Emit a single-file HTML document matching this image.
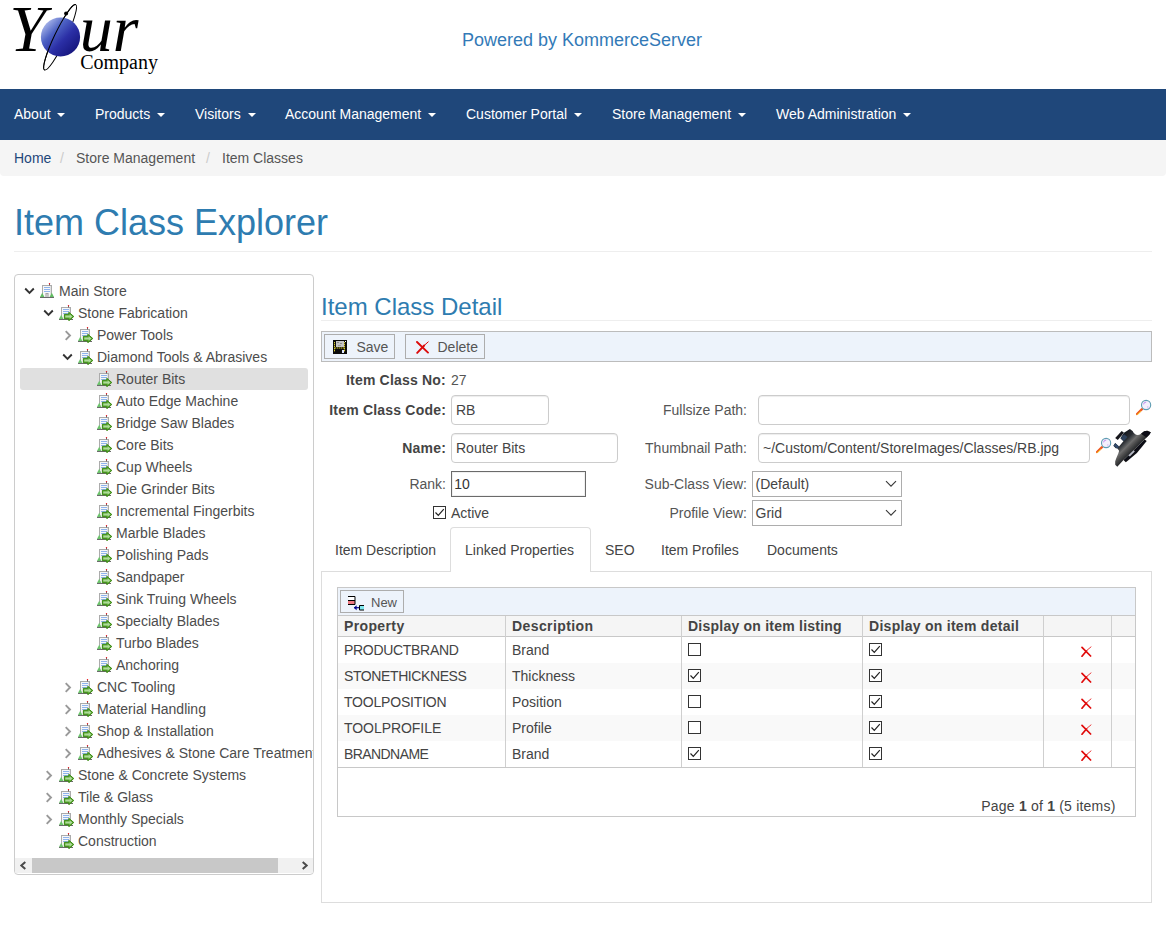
<!DOCTYPE html>
<html lang="en">
<head>
<meta charset="utf-8">
<title>Item Class Explorer</title>
<style>
*{box-sizing:border-box}
html,body{margin:0;padding:0}
body{width:1166px;height:930px;overflow:hidden;background:#fff;color:#333;font-family:"Liberation Sans",sans-serif;font-size:14px;line-height:20px;position:relative}
a{text-decoration:none;color:inherit}
.abs{position:absolute}
#logo{left:8px;top:0;width:170px;height:85px}
#powered{left:-1px;top:29px;width:1166px;text-align:center;font-size:18px;line-height:22px;color:#337ab7}
#nav{left:0;top:89px;width:1166px;height:51px;background:#1f477a}
#nav a{position:absolute;top:15px;color:#fff;font-size:14px;line-height:20px;white-space:nowrap}
#nav a i{display:inline-block;width:0;height:0;margin-left:3px;vertical-align:middle;border-top:4px solid #fff;border-left:4px solid transparent;border-right:4px solid transparent}
#crumb{left:0;top:140px;width:1166px;height:36px;background:#f5f5f5;border-radius:0 0 4px 4px}
#crumb span{position:absolute;top:8px;line-height:20px;white-space:nowrap;color:#555}
#crumb .sep{color:#ccc}
#h1{left:14px;top:203px;font-size:36px;line-height:40px;color:#2e7cb0;white-space:nowrap}
#h1line{left:14px;top:251px;width:1138px;height:1px;background:#eee}
#tree{left:14px;top:274px;width:300px;height:601px;border:1px solid #ccc;border-radius:4px;overflow:hidden;background:#fff}
.tr{position:absolute;height:22px;line-height:22px;white-space:nowrap;color:#4c4c4c}
.tr svg.ic{position:absolute;left:0;top:2px}
.tr span{position:absolute;left:19px;top:0}
.chev{position:absolute}
#sel{left:5px;top:93px;width:288px;height:22px;background:#e0e0e0;border-radius:3px}
#panel{left:321px;top:274px;width:831px;height:630px}
#h2{left:321px;top:292px;font-size:24px;line-height:30px;color:#2e7cb0;white-space:nowrap}
#h2line{left:321px;top:320px;width:831px;height:1px;background:#eee}
.tb{background:#edf3fb;border:1px solid #bcbcbc}
.btn{position:absolute;border:1px solid #adadad;background:#edf3fb;color:#555;white-space:nowrap}
.lbl{position:absolute;white-space:nowrap;text-align:right;line-height:20px;color:#555}
.lbl b{color:#444;letter-spacing:.2px}
.inp{position:absolute;border:1px solid #ccc;border-radius:4px;background:#fff;color:#444;padding:0 4px;white-space:nowrap;overflow:hidden;box-shadow:inset 0 1px 1px rgba(0,0,0,.075)}
.sel{position:absolute;border:1px solid #adadad;background:#fff;color:#444;padding:0 2.5px;white-space:nowrap}
.tabs a{position:absolute;top:540px;line-height:20px;color:#444;white-space:nowrap}
.cb{position:absolute;width:13px;height:13px;border:1px solid #333;background:#fff}
table{border-collapse:collapse}
</style>
</head>
<body>
<!-- header -->
<div class="abs" id="logo"><svg width="180" height="88" viewBox="0 0 180 88" style="position:absolute;left:-8px;top:0">
<defs><linearGradient id="sph" x1="0.1" y1="0.15" x2="0.85" y2="0.9"><stop offset="0" stop-color="#a9b6ea"/><stop offset=".3" stop-color="#4d62c4"/><stop offset=".6" stop-color="#2b2fa6"/><stop offset="1" stop-color="#15157c"/></linearGradient></defs>
<text x="9.6" y="51.4" font-family="Liberation Serif, serif" font-style="italic" font-size="66" fill="#000">Y</text>
<g transform="translate(60.1,37.3) rotate(-64.5)"><ellipse cx="0" cy="0" rx="36.2" ry="5.8" fill="none" stroke="#000" stroke-width="1"/></g>
<circle cx="60.5" cy="37" r="19.6" fill="url(#sph)"/>
<g transform="translate(60.1,37.3) rotate(-64.5)"><path d="M-36.2 0 A36.2 5.8 0 0 1 36.2 0" fill="none" stroke="#000" stroke-width="1"/></g>
<circle cx="66.1" cy="13.4" r="2" fill="#000"/>
<text x="79.7" y="51.4" font-family="Liberation Serif, serif" font-style="italic" font-size="66" fill="#000">ur</text>
<text x="80.2" y="69.1" font-family="Liberation Serif, serif" font-size="20" fill="#000">Company</text>
</svg></div>
<div class="abs" id="powered">Powered by KommerceServer</div>
<!-- navbar -->
<div class="abs" id="nav">
<a style="left:14px">About <i></i></a>
<a style="left:95px">Products <i></i></a>
<a style="left:195px">Visitors <i></i></a>
<a style="left:285px">Account Management <i></i></a>
<a style="left:466px">Customer Portal <i></i></a>
<a style="left:612px">Store Management <i></i></a>
<a style="left:776px">Web Administration <i></i></a>
</div>
<!-- breadcrumb -->
<div class="abs" id="crumb">
<span style="left:14px;color:#1f477a">Home</span>
<span class="sep" style="left:60px">/</span>
<span style="left:76px">Store Management</span>
<span class="sep" style="left:206px">/</span>
<span style="left:222px">Item Classes</span>
</div>
<div class="abs" id="h1">Item Class Explorer</div>
<div class="abs" id="h1line"></div>
<!-- tree -->
<div class="abs" id="tree">
<div class="abs" id="sel"></div>
<div class="tr" style="left:25px;top:5px"><svg class="chev" style="left:-16px;top:7px" width="11" height="8" viewBox="0 0 11 8"><path d="M1.2 1.5 L5.5 5.8 L9.8 1.5" fill="none" stroke="#333" stroke-width="1.9"/></svg><svg class="ic" width="16" height="17" viewBox="0 0 16 17"><rect x="2.5" y="3.5" width="9" height="12" fill="#f7f7f7" stroke="#ababab"/><rect x="10" y="4" width="1" height="11" fill="#e2e2e2"/><rect x="9" y="2" width="1" height="1.5" fill="#666"/><rect x="8.8" y="0.9" width="1.4" height="1.3" rx=".6" fill="#e8141c"/><rect x="4" y="5" width="6" height="1" fill="#8fb4ee"/><rect x="4" y="7" width="6" height="1" fill="#8fb4ee"/><rect x="4" y="9" width="6" height="1" fill="#8fb4ee"/><rect x="5.5" y="11" width="3" height="4" fill="#9c9c9c"/><rect x="6.3" y="11.8" width="1.4" height="3.2" fill="#d6d6d6"/><path d="M0 15 L2.2 10.8 L4.4 15Z M9.6 15 L11.8 10.8 L14 15Z" fill="#62bd62"/><rect x="0" y="15" width="14" height="1" fill="#6a6a6a"/></svg><span>Main Store</span></div>
<div class="tr" style="left:44px;top:27px"><svg class="chev" style="left:-16px;top:7px" width="11" height="8" viewBox="0 0 11 8"><path d="M1.2 1.5 L5.5 5.8 L9.8 1.5" fill="none" stroke="#333" stroke-width="1.9"/></svg><svg class="ic" width="16" height="17" viewBox="0 0 16 17"><rect x="2.5" y="3.5" width="9" height="12" fill="#f7f7f7" stroke="#ababab"/><rect x="10" y="4" width="1" height="11" fill="#e2e2e2"/><rect x="9" y="2" width="1" height="1.5" fill="#666"/><rect x="8.8" y="0.9" width="1.4" height="1.3" rx=".6" fill="#e8141c"/><rect x="4" y="5" width="6" height="1" fill="#8fb4ee"/><rect x="4" y="7" width="6" height="1" fill="#8fb4ee"/><rect x="4" y="9" width="6" height="1" fill="#8fb4ee"/><path d="M0 15 L2.2 10.8 L4.4 15Z" fill="#6cc46c"/><rect x="0" y="15" width="14" height="1" fill="#6a6a6a"/><path d="M5.4 10.3 H9.8 V8.3 L14.8 12.5 L9.8 16.7 V14.7 H5.4Z" fill="#5aa632" stroke="#39890f" stroke-width="1" stroke-linejoin="round"/><path d="M6.3 11.4 H10.7 V10.2 L13.4 12.5 L10.7 14.8 V13.6 H6.3Z" fill="#aedb9a"/></svg><span>Stone Fabrication</span></div>
<div class="tr" style="left:63px;top:49px"><svg class="chev" style="left:-14px;top:5px" width="8" height="13" viewBox="0 0 8 13"><path d="M1.7 2.1 L6 6.5 L1.7 10.9" fill="none" stroke="#9a9a9a" stroke-width="1.9"/></svg><svg class="ic" width="16" height="17" viewBox="0 0 16 17"><rect x="2.5" y="3.5" width="9" height="12" fill="#f7f7f7" stroke="#ababab"/><rect x="10" y="4" width="1" height="11" fill="#e2e2e2"/><rect x="9" y="2" width="1" height="1.5" fill="#666"/><rect x="8.8" y="0.9" width="1.4" height="1.3" rx=".6" fill="#e8141c"/><rect x="4" y="5" width="6" height="1" fill="#8fb4ee"/><rect x="4" y="7" width="6" height="1" fill="#8fb4ee"/><rect x="4" y="9" width="6" height="1" fill="#8fb4ee"/><path d="M0 15 L2.2 10.8 L4.4 15Z" fill="#6cc46c"/><rect x="0" y="15" width="14" height="1" fill="#6a6a6a"/><path d="M5.4 10.3 H9.8 V8.3 L14.8 12.5 L9.8 16.7 V14.7 H5.4Z" fill="#5aa632" stroke="#39890f" stroke-width="1" stroke-linejoin="round"/><path d="M6.3 11.4 H10.7 V10.2 L13.4 12.5 L10.7 14.8 V13.6 H6.3Z" fill="#aedb9a"/></svg><span>Power Tools</span></div>
<div class="tr" style="left:63px;top:71px"><svg class="chev" style="left:-16px;top:7px" width="11" height="8" viewBox="0 0 11 8"><path d="M1.2 1.5 L5.5 5.8 L9.8 1.5" fill="none" stroke="#333" stroke-width="1.9"/></svg><svg class="ic" width="16" height="17" viewBox="0 0 16 17"><rect x="2.5" y="3.5" width="9" height="12" fill="#f7f7f7" stroke="#ababab"/><rect x="10" y="4" width="1" height="11" fill="#e2e2e2"/><rect x="9" y="2" width="1" height="1.5" fill="#666"/><rect x="8.8" y="0.9" width="1.4" height="1.3" rx=".6" fill="#e8141c"/><rect x="4" y="5" width="6" height="1" fill="#8fb4ee"/><rect x="4" y="7" width="6" height="1" fill="#8fb4ee"/><rect x="4" y="9" width="6" height="1" fill="#8fb4ee"/><path d="M0 15 L2.2 10.8 L4.4 15Z" fill="#6cc46c"/><rect x="0" y="15" width="14" height="1" fill="#6a6a6a"/><path d="M5.4 10.3 H9.8 V8.3 L14.8 12.5 L9.8 16.7 V14.7 H5.4Z" fill="#5aa632" stroke="#39890f" stroke-width="1" stroke-linejoin="round"/><path d="M6.3 11.4 H10.7 V10.2 L13.4 12.5 L10.7 14.8 V13.6 H6.3Z" fill="#aedb9a"/></svg><span>Diamond Tools &amp; Abrasives</span></div>
<div class="tr" style="left:82px;top:93px"><svg class="ic" width="16" height="17" viewBox="0 0 16 17"><rect x="2.5" y="3.5" width="9" height="12" fill="#f7f7f7" stroke="#ababab"/><rect x="10" y="4" width="1" height="11" fill="#e2e2e2"/><rect x="9" y="2" width="1" height="1.5" fill="#666"/><rect x="8.8" y="0.9" width="1.4" height="1.3" rx=".6" fill="#e8141c"/><rect x="4" y="5" width="6" height="1" fill="#8fb4ee"/><rect x="4" y="7" width="6" height="1" fill="#8fb4ee"/><rect x="4" y="9" width="6" height="1" fill="#8fb4ee"/><path d="M0 15 L2.2 10.8 L4.4 15Z" fill="#6cc46c"/><rect x="0" y="15" width="14" height="1" fill="#6a6a6a"/><path d="M5.4 10.3 H9.8 V8.3 L14.8 12.5 L9.8 16.7 V14.7 H5.4Z" fill="#5aa632" stroke="#39890f" stroke-width="1" stroke-linejoin="round"/><path d="M6.3 11.4 H10.7 V10.2 L13.4 12.5 L10.7 14.8 V13.6 H6.3Z" fill="#aedb9a"/></svg><span>Router Bits</span></div>
<div class="tr" style="left:82px;top:115px"><svg class="ic" width="16" height="17" viewBox="0 0 16 17"><rect x="2.5" y="3.5" width="9" height="12" fill="#f7f7f7" stroke="#ababab"/><rect x="10" y="4" width="1" height="11" fill="#e2e2e2"/><rect x="9" y="2" width="1" height="1.5" fill="#666"/><rect x="8.8" y="0.9" width="1.4" height="1.3" rx=".6" fill="#e8141c"/><rect x="4" y="5" width="6" height="1" fill="#8fb4ee"/><rect x="4" y="7" width="6" height="1" fill="#8fb4ee"/><rect x="4" y="9" width="6" height="1" fill="#8fb4ee"/><path d="M0 15 L2.2 10.8 L4.4 15Z" fill="#6cc46c"/><rect x="0" y="15" width="14" height="1" fill="#6a6a6a"/><path d="M5.4 10.3 H9.8 V8.3 L14.8 12.5 L9.8 16.7 V14.7 H5.4Z" fill="#5aa632" stroke="#39890f" stroke-width="1" stroke-linejoin="round"/><path d="M6.3 11.4 H10.7 V10.2 L13.4 12.5 L10.7 14.8 V13.6 H6.3Z" fill="#aedb9a"/></svg><span>Auto Edge Machine</span></div>
<div class="tr" style="left:82px;top:137px"><svg class="ic" width="16" height="17" viewBox="0 0 16 17"><rect x="2.5" y="3.5" width="9" height="12" fill="#f7f7f7" stroke="#ababab"/><rect x="10" y="4" width="1" height="11" fill="#e2e2e2"/><rect x="9" y="2" width="1" height="1.5" fill="#666"/><rect x="8.8" y="0.9" width="1.4" height="1.3" rx=".6" fill="#e8141c"/><rect x="4" y="5" width="6" height="1" fill="#8fb4ee"/><rect x="4" y="7" width="6" height="1" fill="#8fb4ee"/><rect x="4" y="9" width="6" height="1" fill="#8fb4ee"/><path d="M0 15 L2.2 10.8 L4.4 15Z" fill="#6cc46c"/><rect x="0" y="15" width="14" height="1" fill="#6a6a6a"/><path d="M5.4 10.3 H9.8 V8.3 L14.8 12.5 L9.8 16.7 V14.7 H5.4Z" fill="#5aa632" stroke="#39890f" stroke-width="1" stroke-linejoin="round"/><path d="M6.3 11.4 H10.7 V10.2 L13.4 12.5 L10.7 14.8 V13.6 H6.3Z" fill="#aedb9a"/></svg><span>Bridge Saw Blades</span></div>
<div class="tr" style="left:82px;top:159px"><svg class="ic" width="16" height="17" viewBox="0 0 16 17"><rect x="2.5" y="3.5" width="9" height="12" fill="#f7f7f7" stroke="#ababab"/><rect x="10" y="4" width="1" height="11" fill="#e2e2e2"/><rect x="9" y="2" width="1" height="1.5" fill="#666"/><rect x="8.8" y="0.9" width="1.4" height="1.3" rx=".6" fill="#e8141c"/><rect x="4" y="5" width="6" height="1" fill="#8fb4ee"/><rect x="4" y="7" width="6" height="1" fill="#8fb4ee"/><rect x="4" y="9" width="6" height="1" fill="#8fb4ee"/><path d="M0 15 L2.2 10.8 L4.4 15Z" fill="#6cc46c"/><rect x="0" y="15" width="14" height="1" fill="#6a6a6a"/><path d="M5.4 10.3 H9.8 V8.3 L14.8 12.5 L9.8 16.7 V14.7 H5.4Z" fill="#5aa632" stroke="#39890f" stroke-width="1" stroke-linejoin="round"/><path d="M6.3 11.4 H10.7 V10.2 L13.4 12.5 L10.7 14.8 V13.6 H6.3Z" fill="#aedb9a"/></svg><span>Core Bits</span></div>
<div class="tr" style="left:82px;top:181px"><svg class="ic" width="16" height="17" viewBox="0 0 16 17"><rect x="2.5" y="3.5" width="9" height="12" fill="#f7f7f7" stroke="#ababab"/><rect x="10" y="4" width="1" height="11" fill="#e2e2e2"/><rect x="9" y="2" width="1" height="1.5" fill="#666"/><rect x="8.8" y="0.9" width="1.4" height="1.3" rx=".6" fill="#e8141c"/><rect x="4" y="5" width="6" height="1" fill="#8fb4ee"/><rect x="4" y="7" width="6" height="1" fill="#8fb4ee"/><rect x="4" y="9" width="6" height="1" fill="#8fb4ee"/><path d="M0 15 L2.2 10.8 L4.4 15Z" fill="#6cc46c"/><rect x="0" y="15" width="14" height="1" fill="#6a6a6a"/><path d="M5.4 10.3 H9.8 V8.3 L14.8 12.5 L9.8 16.7 V14.7 H5.4Z" fill="#5aa632" stroke="#39890f" stroke-width="1" stroke-linejoin="round"/><path d="M6.3 11.4 H10.7 V10.2 L13.4 12.5 L10.7 14.8 V13.6 H6.3Z" fill="#aedb9a"/></svg><span>Cup Wheels</span></div>
<div class="tr" style="left:82px;top:203px"><svg class="ic" width="16" height="17" viewBox="0 0 16 17"><rect x="2.5" y="3.5" width="9" height="12" fill="#f7f7f7" stroke="#ababab"/><rect x="10" y="4" width="1" height="11" fill="#e2e2e2"/><rect x="9" y="2" width="1" height="1.5" fill="#666"/><rect x="8.8" y="0.9" width="1.4" height="1.3" rx=".6" fill="#e8141c"/><rect x="4" y="5" width="6" height="1" fill="#8fb4ee"/><rect x="4" y="7" width="6" height="1" fill="#8fb4ee"/><rect x="4" y="9" width="6" height="1" fill="#8fb4ee"/><path d="M0 15 L2.2 10.8 L4.4 15Z" fill="#6cc46c"/><rect x="0" y="15" width="14" height="1" fill="#6a6a6a"/><path d="M5.4 10.3 H9.8 V8.3 L14.8 12.5 L9.8 16.7 V14.7 H5.4Z" fill="#5aa632" stroke="#39890f" stroke-width="1" stroke-linejoin="round"/><path d="M6.3 11.4 H10.7 V10.2 L13.4 12.5 L10.7 14.8 V13.6 H6.3Z" fill="#aedb9a"/></svg><span>Die Grinder Bits</span></div>
<div class="tr" style="left:82px;top:225px"><svg class="ic" width="16" height="17" viewBox="0 0 16 17"><rect x="2.5" y="3.5" width="9" height="12" fill="#f7f7f7" stroke="#ababab"/><rect x="10" y="4" width="1" height="11" fill="#e2e2e2"/><rect x="9" y="2" width="1" height="1.5" fill="#666"/><rect x="8.8" y="0.9" width="1.4" height="1.3" rx=".6" fill="#e8141c"/><rect x="4" y="5" width="6" height="1" fill="#8fb4ee"/><rect x="4" y="7" width="6" height="1" fill="#8fb4ee"/><rect x="4" y="9" width="6" height="1" fill="#8fb4ee"/><path d="M0 15 L2.2 10.8 L4.4 15Z" fill="#6cc46c"/><rect x="0" y="15" width="14" height="1" fill="#6a6a6a"/><path d="M5.4 10.3 H9.8 V8.3 L14.8 12.5 L9.8 16.7 V14.7 H5.4Z" fill="#5aa632" stroke="#39890f" stroke-width="1" stroke-linejoin="round"/><path d="M6.3 11.4 H10.7 V10.2 L13.4 12.5 L10.7 14.8 V13.6 H6.3Z" fill="#aedb9a"/></svg><span>Incremental Fingerbits</span></div>
<div class="tr" style="left:82px;top:247px"><svg class="ic" width="16" height="17" viewBox="0 0 16 17"><rect x="2.5" y="3.5" width="9" height="12" fill="#f7f7f7" stroke="#ababab"/><rect x="10" y="4" width="1" height="11" fill="#e2e2e2"/><rect x="9" y="2" width="1" height="1.5" fill="#666"/><rect x="8.8" y="0.9" width="1.4" height="1.3" rx=".6" fill="#e8141c"/><rect x="4" y="5" width="6" height="1" fill="#8fb4ee"/><rect x="4" y="7" width="6" height="1" fill="#8fb4ee"/><rect x="4" y="9" width="6" height="1" fill="#8fb4ee"/><path d="M0 15 L2.2 10.8 L4.4 15Z" fill="#6cc46c"/><rect x="0" y="15" width="14" height="1" fill="#6a6a6a"/><path d="M5.4 10.3 H9.8 V8.3 L14.8 12.5 L9.8 16.7 V14.7 H5.4Z" fill="#5aa632" stroke="#39890f" stroke-width="1" stroke-linejoin="round"/><path d="M6.3 11.4 H10.7 V10.2 L13.4 12.5 L10.7 14.8 V13.6 H6.3Z" fill="#aedb9a"/></svg><span>Marble Blades</span></div>
<div class="tr" style="left:82px;top:269px"><svg class="ic" width="16" height="17" viewBox="0 0 16 17"><rect x="2.5" y="3.5" width="9" height="12" fill="#f7f7f7" stroke="#ababab"/><rect x="10" y="4" width="1" height="11" fill="#e2e2e2"/><rect x="9" y="2" width="1" height="1.5" fill="#666"/><rect x="8.8" y="0.9" width="1.4" height="1.3" rx=".6" fill="#e8141c"/><rect x="4" y="5" width="6" height="1" fill="#8fb4ee"/><rect x="4" y="7" width="6" height="1" fill="#8fb4ee"/><rect x="4" y="9" width="6" height="1" fill="#8fb4ee"/><path d="M0 15 L2.2 10.8 L4.4 15Z" fill="#6cc46c"/><rect x="0" y="15" width="14" height="1" fill="#6a6a6a"/><path d="M5.4 10.3 H9.8 V8.3 L14.8 12.5 L9.8 16.7 V14.7 H5.4Z" fill="#5aa632" stroke="#39890f" stroke-width="1" stroke-linejoin="round"/><path d="M6.3 11.4 H10.7 V10.2 L13.4 12.5 L10.7 14.8 V13.6 H6.3Z" fill="#aedb9a"/></svg><span>Polishing Pads</span></div>
<div class="tr" style="left:82px;top:291px"><svg class="ic" width="16" height="17" viewBox="0 0 16 17"><rect x="2.5" y="3.5" width="9" height="12" fill="#f7f7f7" stroke="#ababab"/><rect x="10" y="4" width="1" height="11" fill="#e2e2e2"/><rect x="9" y="2" width="1" height="1.5" fill="#666"/><rect x="8.8" y="0.9" width="1.4" height="1.3" rx=".6" fill="#e8141c"/><rect x="4" y="5" width="6" height="1" fill="#8fb4ee"/><rect x="4" y="7" width="6" height="1" fill="#8fb4ee"/><rect x="4" y="9" width="6" height="1" fill="#8fb4ee"/><path d="M0 15 L2.2 10.8 L4.4 15Z" fill="#6cc46c"/><rect x="0" y="15" width="14" height="1" fill="#6a6a6a"/><path d="M5.4 10.3 H9.8 V8.3 L14.8 12.5 L9.8 16.7 V14.7 H5.4Z" fill="#5aa632" stroke="#39890f" stroke-width="1" stroke-linejoin="round"/><path d="M6.3 11.4 H10.7 V10.2 L13.4 12.5 L10.7 14.8 V13.6 H6.3Z" fill="#aedb9a"/></svg><span>Sandpaper</span></div>
<div class="tr" style="left:82px;top:313px"><svg class="ic" width="16" height="17" viewBox="0 0 16 17"><rect x="2.5" y="3.5" width="9" height="12" fill="#f7f7f7" stroke="#ababab"/><rect x="10" y="4" width="1" height="11" fill="#e2e2e2"/><rect x="9" y="2" width="1" height="1.5" fill="#666"/><rect x="8.8" y="0.9" width="1.4" height="1.3" rx=".6" fill="#e8141c"/><rect x="4" y="5" width="6" height="1" fill="#8fb4ee"/><rect x="4" y="7" width="6" height="1" fill="#8fb4ee"/><rect x="4" y="9" width="6" height="1" fill="#8fb4ee"/><path d="M0 15 L2.2 10.8 L4.4 15Z" fill="#6cc46c"/><rect x="0" y="15" width="14" height="1" fill="#6a6a6a"/><path d="M5.4 10.3 H9.8 V8.3 L14.8 12.5 L9.8 16.7 V14.7 H5.4Z" fill="#5aa632" stroke="#39890f" stroke-width="1" stroke-linejoin="round"/><path d="M6.3 11.4 H10.7 V10.2 L13.4 12.5 L10.7 14.8 V13.6 H6.3Z" fill="#aedb9a"/></svg><span>Sink Truing Wheels</span></div>
<div class="tr" style="left:82px;top:335px"><svg class="ic" width="16" height="17" viewBox="0 0 16 17"><rect x="2.5" y="3.5" width="9" height="12" fill="#f7f7f7" stroke="#ababab"/><rect x="10" y="4" width="1" height="11" fill="#e2e2e2"/><rect x="9" y="2" width="1" height="1.5" fill="#666"/><rect x="8.8" y="0.9" width="1.4" height="1.3" rx=".6" fill="#e8141c"/><rect x="4" y="5" width="6" height="1" fill="#8fb4ee"/><rect x="4" y="7" width="6" height="1" fill="#8fb4ee"/><rect x="4" y="9" width="6" height="1" fill="#8fb4ee"/><path d="M0 15 L2.2 10.8 L4.4 15Z" fill="#6cc46c"/><rect x="0" y="15" width="14" height="1" fill="#6a6a6a"/><path d="M5.4 10.3 H9.8 V8.3 L14.8 12.5 L9.8 16.7 V14.7 H5.4Z" fill="#5aa632" stroke="#39890f" stroke-width="1" stroke-linejoin="round"/><path d="M6.3 11.4 H10.7 V10.2 L13.4 12.5 L10.7 14.8 V13.6 H6.3Z" fill="#aedb9a"/></svg><span>Specialty Blades</span></div>
<div class="tr" style="left:82px;top:357px"><svg class="ic" width="16" height="17" viewBox="0 0 16 17"><rect x="2.5" y="3.5" width="9" height="12" fill="#f7f7f7" stroke="#ababab"/><rect x="10" y="4" width="1" height="11" fill="#e2e2e2"/><rect x="9" y="2" width="1" height="1.5" fill="#666"/><rect x="8.8" y="0.9" width="1.4" height="1.3" rx=".6" fill="#e8141c"/><rect x="4" y="5" width="6" height="1" fill="#8fb4ee"/><rect x="4" y="7" width="6" height="1" fill="#8fb4ee"/><rect x="4" y="9" width="6" height="1" fill="#8fb4ee"/><path d="M0 15 L2.2 10.8 L4.4 15Z" fill="#6cc46c"/><rect x="0" y="15" width="14" height="1" fill="#6a6a6a"/><path d="M5.4 10.3 H9.8 V8.3 L14.8 12.5 L9.8 16.7 V14.7 H5.4Z" fill="#5aa632" stroke="#39890f" stroke-width="1" stroke-linejoin="round"/><path d="M6.3 11.4 H10.7 V10.2 L13.4 12.5 L10.7 14.8 V13.6 H6.3Z" fill="#aedb9a"/></svg><span>Turbo Blades</span></div>
<div class="tr" style="left:82px;top:379px"><svg class="ic" width="16" height="17" viewBox="0 0 16 17"><rect x="2.5" y="3.5" width="9" height="12" fill="#f7f7f7" stroke="#ababab"/><rect x="10" y="4" width="1" height="11" fill="#e2e2e2"/><rect x="9" y="2" width="1" height="1.5" fill="#666"/><rect x="8.8" y="0.9" width="1.4" height="1.3" rx=".6" fill="#e8141c"/><rect x="4" y="5" width="6" height="1" fill="#8fb4ee"/><rect x="4" y="7" width="6" height="1" fill="#8fb4ee"/><rect x="4" y="9" width="6" height="1" fill="#8fb4ee"/><path d="M0 15 L2.2 10.8 L4.4 15Z" fill="#6cc46c"/><rect x="0" y="15" width="14" height="1" fill="#6a6a6a"/><path d="M5.4 10.3 H9.8 V8.3 L14.8 12.5 L9.8 16.7 V14.7 H5.4Z" fill="#5aa632" stroke="#39890f" stroke-width="1" stroke-linejoin="round"/><path d="M6.3 11.4 H10.7 V10.2 L13.4 12.5 L10.7 14.8 V13.6 H6.3Z" fill="#aedb9a"/></svg><span>Anchoring</span></div>
<div class="tr" style="left:63px;top:401px"><svg class="chev" style="left:-14px;top:5px" width="8" height="13" viewBox="0 0 8 13"><path d="M1.7 2.1 L6 6.5 L1.7 10.9" fill="none" stroke="#9a9a9a" stroke-width="1.9"/></svg><svg class="ic" width="16" height="17" viewBox="0 0 16 17"><rect x="2.5" y="3.5" width="9" height="12" fill="#f7f7f7" stroke="#ababab"/><rect x="10" y="4" width="1" height="11" fill="#e2e2e2"/><rect x="9" y="2" width="1" height="1.5" fill="#666"/><rect x="8.8" y="0.9" width="1.4" height="1.3" rx=".6" fill="#e8141c"/><rect x="4" y="5" width="6" height="1" fill="#8fb4ee"/><rect x="4" y="7" width="6" height="1" fill="#8fb4ee"/><rect x="4" y="9" width="6" height="1" fill="#8fb4ee"/><path d="M0 15 L2.2 10.8 L4.4 15Z" fill="#6cc46c"/><rect x="0" y="15" width="14" height="1" fill="#6a6a6a"/><path d="M5.4 10.3 H9.8 V8.3 L14.8 12.5 L9.8 16.7 V14.7 H5.4Z" fill="#5aa632" stroke="#39890f" stroke-width="1" stroke-linejoin="round"/><path d="M6.3 11.4 H10.7 V10.2 L13.4 12.5 L10.7 14.8 V13.6 H6.3Z" fill="#aedb9a"/></svg><span>CNC Tooling</span></div>
<div class="tr" style="left:63px;top:423px"><svg class="chev" style="left:-14px;top:5px" width="8" height="13" viewBox="0 0 8 13"><path d="M1.7 2.1 L6 6.5 L1.7 10.9" fill="none" stroke="#9a9a9a" stroke-width="1.9"/></svg><svg class="ic" width="16" height="17" viewBox="0 0 16 17"><rect x="2.5" y="3.5" width="9" height="12" fill="#f7f7f7" stroke="#ababab"/><rect x="10" y="4" width="1" height="11" fill="#e2e2e2"/><rect x="9" y="2" width="1" height="1.5" fill="#666"/><rect x="8.8" y="0.9" width="1.4" height="1.3" rx=".6" fill="#e8141c"/><rect x="4" y="5" width="6" height="1" fill="#8fb4ee"/><rect x="4" y="7" width="6" height="1" fill="#8fb4ee"/><rect x="4" y="9" width="6" height="1" fill="#8fb4ee"/><path d="M0 15 L2.2 10.8 L4.4 15Z" fill="#6cc46c"/><rect x="0" y="15" width="14" height="1" fill="#6a6a6a"/><path d="M5.4 10.3 H9.8 V8.3 L14.8 12.5 L9.8 16.7 V14.7 H5.4Z" fill="#5aa632" stroke="#39890f" stroke-width="1" stroke-linejoin="round"/><path d="M6.3 11.4 H10.7 V10.2 L13.4 12.5 L10.7 14.8 V13.6 H6.3Z" fill="#aedb9a"/></svg><span>Material Handling</span></div>
<div class="tr" style="left:63px;top:445px"><svg class="chev" style="left:-14px;top:5px" width="8" height="13" viewBox="0 0 8 13"><path d="M1.7 2.1 L6 6.5 L1.7 10.9" fill="none" stroke="#9a9a9a" stroke-width="1.9"/></svg><svg class="ic" width="16" height="17" viewBox="0 0 16 17"><rect x="2.5" y="3.5" width="9" height="12" fill="#f7f7f7" stroke="#ababab"/><rect x="10" y="4" width="1" height="11" fill="#e2e2e2"/><rect x="9" y="2" width="1" height="1.5" fill="#666"/><rect x="8.8" y="0.9" width="1.4" height="1.3" rx=".6" fill="#e8141c"/><rect x="4" y="5" width="6" height="1" fill="#8fb4ee"/><rect x="4" y="7" width="6" height="1" fill="#8fb4ee"/><rect x="4" y="9" width="6" height="1" fill="#8fb4ee"/><path d="M0 15 L2.2 10.8 L4.4 15Z" fill="#6cc46c"/><rect x="0" y="15" width="14" height="1" fill="#6a6a6a"/><path d="M5.4 10.3 H9.8 V8.3 L14.8 12.5 L9.8 16.7 V14.7 H5.4Z" fill="#5aa632" stroke="#39890f" stroke-width="1" stroke-linejoin="round"/><path d="M6.3 11.4 H10.7 V10.2 L13.4 12.5 L10.7 14.8 V13.6 H6.3Z" fill="#aedb9a"/></svg><span>Shop &amp; Installation</span></div>
<div class="tr" style="left:63px;top:467px"><svg class="chev" style="left:-14px;top:5px" width="8" height="13" viewBox="0 0 8 13"><path d="M1.7 2.1 L6 6.5 L1.7 10.9" fill="none" stroke="#9a9a9a" stroke-width="1.9"/></svg><svg class="ic" width="16" height="17" viewBox="0 0 16 17"><rect x="2.5" y="3.5" width="9" height="12" fill="#f7f7f7" stroke="#ababab"/><rect x="10" y="4" width="1" height="11" fill="#e2e2e2"/><rect x="9" y="2" width="1" height="1.5" fill="#666"/><rect x="8.8" y="0.9" width="1.4" height="1.3" rx=".6" fill="#e8141c"/><rect x="4" y="5" width="6" height="1" fill="#8fb4ee"/><rect x="4" y="7" width="6" height="1" fill="#8fb4ee"/><rect x="4" y="9" width="6" height="1" fill="#8fb4ee"/><path d="M0 15 L2.2 10.8 L4.4 15Z" fill="#6cc46c"/><rect x="0" y="15" width="14" height="1" fill="#6a6a6a"/><path d="M5.4 10.3 H9.8 V8.3 L14.8 12.5 L9.8 16.7 V14.7 H5.4Z" fill="#5aa632" stroke="#39890f" stroke-width="1" stroke-linejoin="round"/><path d="M6.3 11.4 H10.7 V10.2 L13.4 12.5 L10.7 14.8 V13.6 H6.3Z" fill="#aedb9a"/></svg><span>Adhesives &amp; Stone Care Treatments</span></div>
<div class="tr" style="left:44px;top:489px"><svg class="chev" style="left:-14px;top:5px" width="8" height="13" viewBox="0 0 8 13"><path d="M1.7 2.1 L6 6.5 L1.7 10.9" fill="none" stroke="#9a9a9a" stroke-width="1.9"/></svg><svg class="ic" width="16" height="17" viewBox="0 0 16 17"><rect x="2.5" y="3.5" width="9" height="12" fill="#f7f7f7" stroke="#ababab"/><rect x="10" y="4" width="1" height="11" fill="#e2e2e2"/><rect x="9" y="2" width="1" height="1.5" fill="#666"/><rect x="8.8" y="0.9" width="1.4" height="1.3" rx=".6" fill="#e8141c"/><rect x="4" y="5" width="6" height="1" fill="#8fb4ee"/><rect x="4" y="7" width="6" height="1" fill="#8fb4ee"/><rect x="4" y="9" width="6" height="1" fill="#8fb4ee"/><path d="M0 15 L2.2 10.8 L4.4 15Z" fill="#6cc46c"/><rect x="0" y="15" width="14" height="1" fill="#6a6a6a"/><path d="M5.4 10.3 H9.8 V8.3 L14.8 12.5 L9.8 16.7 V14.7 H5.4Z" fill="#5aa632" stroke="#39890f" stroke-width="1" stroke-linejoin="round"/><path d="M6.3 11.4 H10.7 V10.2 L13.4 12.5 L10.7 14.8 V13.6 H6.3Z" fill="#aedb9a"/></svg><span>Stone &amp; Concrete Systems</span></div>
<div class="tr" style="left:44px;top:511px"><svg class="chev" style="left:-14px;top:5px" width="8" height="13" viewBox="0 0 8 13"><path d="M1.7 2.1 L6 6.5 L1.7 10.9" fill="none" stroke="#9a9a9a" stroke-width="1.9"/></svg><svg class="ic" width="16" height="17" viewBox="0 0 16 17"><rect x="2.5" y="3.5" width="9" height="12" fill="#f7f7f7" stroke="#ababab"/><rect x="10" y="4" width="1" height="11" fill="#e2e2e2"/><rect x="9" y="2" width="1" height="1.5" fill="#666"/><rect x="8.8" y="0.9" width="1.4" height="1.3" rx=".6" fill="#e8141c"/><rect x="4" y="5" width="6" height="1" fill="#8fb4ee"/><rect x="4" y="7" width="6" height="1" fill="#8fb4ee"/><rect x="4" y="9" width="6" height="1" fill="#8fb4ee"/><path d="M0 15 L2.2 10.8 L4.4 15Z" fill="#6cc46c"/><rect x="0" y="15" width="14" height="1" fill="#6a6a6a"/><path d="M5.4 10.3 H9.8 V8.3 L14.8 12.5 L9.8 16.7 V14.7 H5.4Z" fill="#5aa632" stroke="#39890f" stroke-width="1" stroke-linejoin="round"/><path d="M6.3 11.4 H10.7 V10.2 L13.4 12.5 L10.7 14.8 V13.6 H6.3Z" fill="#aedb9a"/></svg><span>Tile &amp; Glass</span></div>
<div class="tr" style="left:44px;top:533px"><svg class="chev" style="left:-14px;top:5px" width="8" height="13" viewBox="0 0 8 13"><path d="M1.7 2.1 L6 6.5 L1.7 10.9" fill="none" stroke="#9a9a9a" stroke-width="1.9"/></svg><svg class="ic" width="16" height="17" viewBox="0 0 16 17"><rect x="2.5" y="3.5" width="9" height="12" fill="#f7f7f7" stroke="#ababab"/><rect x="10" y="4" width="1" height="11" fill="#e2e2e2"/><rect x="9" y="2" width="1" height="1.5" fill="#666"/><rect x="8.8" y="0.9" width="1.4" height="1.3" rx=".6" fill="#e8141c"/><rect x="4" y="5" width="6" height="1" fill="#8fb4ee"/><rect x="4" y="7" width="6" height="1" fill="#8fb4ee"/><rect x="4" y="9" width="6" height="1" fill="#8fb4ee"/><path d="M0 15 L2.2 10.8 L4.4 15Z" fill="#6cc46c"/><rect x="0" y="15" width="14" height="1" fill="#6a6a6a"/><path d="M5.4 10.3 H9.8 V8.3 L14.8 12.5 L9.8 16.7 V14.7 H5.4Z" fill="#5aa632" stroke="#39890f" stroke-width="1" stroke-linejoin="round"/><path d="M6.3 11.4 H10.7 V10.2 L13.4 12.5 L10.7 14.8 V13.6 H6.3Z" fill="#aedb9a"/></svg><span>Monthly Specials</span></div>
<div class="tr" style="left:44px;top:555px"><svg class="ic" width="16" height="17" viewBox="0 0 16 17"><rect x="2.5" y="3.5" width="9" height="12" fill="#f7f7f7" stroke="#ababab"/><rect x="10" y="4" width="1" height="11" fill="#e2e2e2"/><rect x="9" y="2" width="1" height="1.5" fill="#666"/><rect x="8.8" y="0.9" width="1.4" height="1.3" rx=".6" fill="#e8141c"/><rect x="4" y="5" width="6" height="1" fill="#8fb4ee"/><rect x="4" y="7" width="6" height="1" fill="#8fb4ee"/><rect x="4" y="9" width="6" height="1" fill="#8fb4ee"/><path d="M0 15 L2.2 10.8 L4.4 15Z" fill="#6cc46c"/><rect x="0" y="15" width="14" height="1" fill="#6a6a6a"/><path d="M5.4 10.3 H9.8 V8.3 L14.8 12.5 L9.8 16.7 V14.7 H5.4Z" fill="#5aa632" stroke="#39890f" stroke-width="1" stroke-linejoin="round"/><path d="M6.3 11.4 H10.7 V10.2 L13.4 12.5 L10.7 14.8 V13.6 H6.3Z" fill="#aedb9a"/></svg><span>Construction</span></div>
<div class="abs" style="left:0;top:583px;width:298px;height:15px;background:#f1f1f1"></div>
<div class="abs" style="left:17px;top:583px;width:246px;height:15px;background:#c8c8c8"></div>
<svg class="abs" style="left:4px;top:586px" width="8" height="9" viewBox="0 0 8 9"><path d="M6.3 0.9 L2.3 4.5 L6.3 8.1" fill="none" stroke="#4a4a4a" stroke-width="2"/></svg>
<svg class="abs" style="left:286px;top:586px" width="8" height="9" viewBox="0 0 8 9"><path d="M1.7 0.9 L5.7 4.5 L1.7 8.1" fill="none" stroke="#4a4a4a" stroke-width="2"/></svg>
</div>
<!-- detail -->
<div class="abs" id="h2">Item Class Detail</div>
<div class="abs" id="h2line"></div>
<div class="abs" id="detail">
<div class="abs" style="left:321px;top:571px;width:831px;height:332px;border:1px solid #ddd;border-top:0"></div>
<div class="abs tb" style="left:321px;top:331px;width:831px;height:31px"></div>
<div class="btn" style="left:324px;top:334px;width:71px;height:25px"><svg style="position:absolute;left:8px;top:5px" width="14" height="14" viewBox="0 0 14 14"><rect x="0" y="0" width="14" height="14" fill="#0a0a0a"/><rect x="3" y="1" width="8" height="6" fill="#c4c4c4"/><rect x="4" y="2" width="2" height="1" fill="#8c8c8c"/><rect x="7" y="3" width="2" height="1" fill="#8c8c8c"/><rect x="5" y="5" width="3" height="1" fill="#9a9a9a"/><rect x="12" y="1" width="1" height="1" fill="#fff"/><path d="M1.5 2 V12 M11.5 2 V12 M2 8 H11" fill="none" stroke="#d8cc2a" stroke-width="1" stroke-dasharray="1.4 .6"/><rect x="9" y="10" width="2" height="3" fill="#dfe6ff"/></svg><span style="position:absolute;left:31.5px;top:2px">Save</span></div>
<div class="btn" style="left:405px;top:334px;width:80px;height:25px"><svg style="position:absolute;left:10px;top:6px" width="14" height="14" viewBox="0 0 14 14"><path d="M1 1 L12 11.6" fill="none" stroke="#dc0a0a" stroke-width="1.9" stroke-linecap="round"/><path d="M1.2 11.9 L8.2 4.5" fill="none" stroke="#dc0a0a" stroke-width="1.9" stroke-linecap="round"/><path d="M8.2 4.5 L12.2 0.9" fill="none" stroke="#dc0a0a" stroke-width="1" stroke-linecap="round"/></svg><span style="position:absolute;left:31.5px;top:2px">Delete</span></div>
<div class="lbl" style="left:246px;width:200px;top:370px"><b>Item Class No:</b></div>
<div class="lbl" style="left:451px;top:370px;text-align:left">27</div>
<div class="lbl" style="left:246px;width:200px;top:400px"><b>Item Class Code:</b></div>
<div class="inp" style="left:451px;top:395px;width:98px;height:30px;line-height:28px">RB</div>
<div class="lbl" style="left:246px;width:200px;top:438px"><b>Name:</b></div>
<div class="inp" style="left:451px;top:433px;width:167px;height:30px;line-height:28px">Router Bits</div>
<div class="lbl" style="left:246px;width:200px;top:474px">Rank:</div>
<div class="abs" style="left:451px;top:471px;width:135px;height:26px;border:1px solid #6a6a6a;box-shadow:inset 0 0 0 1px rgba(0,0,0,.06);background:#fff;line-height:24px;padding:0 2.3px;color:#333">10</div>
<div class="cb" style="left:433px;top:506px"><svg width="11" height="11" viewBox="0 0 11 11" style="position:absolute;left:0;top:0"><path d="M1.5 5.5 L4.3 8.3 L9.8 2.2" fill="none" stroke="#222" stroke-width="1.2"/></svg></div>
<div class="lbl" style="left:451px;top:503px;text-align:left;color:#444">Active</div>
<div class="lbl" style="left:547px;width:200px;top:400px">Fullsize Path:</div>
<div class="inp" style="left:758px;top:395px;width:372px;height:30px"></div>
<div class="lbl" style="left:547px;width:200px;top:438px">Thumbnail Path:</div>
<div class="inp" style="left:758px;top:433px;width:332px;height:30px;line-height:28px">~/Custom/Content/StoreImages/Classes/RB.jpg</div>
<div class="lbl" style="left:547px;width:200px;top:474px">Sub-Class View:</div>
<div class="lbl" style="left:547px;width:200px;top:503px">Profile View:</div>
<div class="sel" style="left:752px;top:471px;width:150px;height:26px;line-height:24px">(Default)<svg style="position:absolute;right:4px;top:7.5px" width="12" height="8" viewBox="0 0 12 8"><path d="M1 1.2 L6 6.2 L11 1.2" fill="none" stroke="#3a3a3a" stroke-width="1.15"/></svg></div>
<div class="sel" style="left:752px;top:500px;width:150px;height:26px;line-height:24px">Grid<svg style="position:absolute;right:4px;top:7.5px" width="12" height="8" viewBox="0 0 12 8"><path d="M1 1.2 L6 6.2 L11 1.2" fill="none" stroke="#3a3a3a" stroke-width="1.15"/></svg></div>
<svg class="abs" style="left:1136px;top:399px" width="17" height="17" viewBox="0 0 17 17"><path d="M1 15 L6 10.2" stroke="#ee5a24" stroke-width="2.3" stroke-linecap="round"/><path d="M1.2 15.7 L4.6 12.5" stroke="#f7c81e" stroke-width="1" stroke-linecap="round"/><circle cx="10.1" cy="6" r="4.6" fill="#f4effc" stroke="#5f9cb2" stroke-width="1.1"/><path d="M7.4 5.4 A3 3 0 0 1 10.2 3.1" fill="none" stroke="#c9a0f0" stroke-width="1.1"/><circle cx="11.8" cy="8" r=".8" fill="#d6b8f4"/></svg>
<svg class="abs" style="left:1096px;top:437px" width="17" height="17" viewBox="0 0 17 17"><path d="M1 15 L6 10.2" stroke="#ee5a24" stroke-width="2.3" stroke-linecap="round"/><path d="M1.2 15.7 L4.6 12.5" stroke="#f7c81e" stroke-width="1" stroke-linecap="round"/><circle cx="10.1" cy="6" r="4.6" fill="#f4effc" stroke="#5f9cb2" stroke-width="1.1"/><path d="M7.4 5.4 A3 3 0 0 1 10.2 3.1" fill="none" stroke="#c9a0f0" stroke-width="1.1"/><circle cx="11.8" cy="8" r=".8" fill="#d6b8f4"/></svg>
<svg class="abs" style="left:1108px;top:424px" width="50" height="48" viewBox="0 0 50 48"><defs><linearGradient id="rb" gradientUnits="userSpaceOnUse" x1="14" y1="12" x2="32" y2="30"><stop offset="0" stop-color="#161a20"/><stop offset=".22" stop-color="#2a2e33"/><stop offset=".42" stop-color="#6e6e6e"/><stop offset=".56" stop-color="#4a4a4a"/><stop offset=".72" stop-color="#26282a"/><stop offset="1" stop-color="#0c0e10"/></linearGradient><filter id="bl" x="-10%" y="-10%" width="120%" height="120%"><feGaussianBlur stdDeviation=".45"/></filter></defs><g filter="url(#bl)"><path d="M36.6 15.5 L38.7 17 L28.9 28.9 L20.6 36.1 L17.8 38.2 L15.5 36.1 Z" fill="#0d1013"/><path d="M20 31 L25 25.5 L26.8 27.4 L21.8 32.6Z" fill="#b9bcc8"/><path d="M16 8.8 L21.9 4.9 L24.8 7.2 C26 10 29 12.5 33 9.8 L36.1 7.2 L39.2 6.7 L42.8 8.3 L41.3 10.8 L36.6 15.5 L15.5 36.1 L9.3 42.8 L7.2 40.8 L7.2 37.2 C8.5 33 10.5 30 11.1 26.8 L9.3 24.3 L7.7 24.3 L5.4 21.7 L7.2 19.1 L11 22.6 L15.4 17.2 L12.4 14.3 Z" fill="url(#rb)"/><path d="M7.2 13.9 L13.7 7 L16 8.8 L9.8 16 Z" fill="#14171b"/><path d="M12.6 14.2 L16 10.2 L19.5 13 L15.6 17.2Z" fill="#2f4560" opacity=".9"/><path d="M5.6 21.6 L7.3 19.3 L11 22.6 L9.2 24.8Z" fill="#30486a"/><path d="M33 9.8 L36.1 7.2 L39.2 6.7 L42.8 8.3 L41.3 10.8 L38.5 13.5 Z" fill="#0e1012"/></g></svg>
<div class="abs" style="left:321px;top:571px;width:130px;height:1px;background:#ddd"></div>
<div class="abs" style="left:590px;top:571px;width:562px;height:1px;background:#ddd"></div>
<div class="abs" style="left:450px;top:527px;width:141px;height:45px;border:1px solid #ddd;border-bottom:0;border-radius:4px 4px 0 0;background:#fff"></div>
<div class="tabs"><a style="left:335px">Item Description</a><a style="left:465px">Linked Properties</a><a style="left:605px">SEO</a><a style="left:661px">Item Profiles</a><a style="left:767px">Documents</a></div>
<div class="abs" style="left:337px;top:587px;width:799px;height:230px;border:1px solid #c8c8c8"></div>
<div class="abs" style="left:338px;top:588px;width:797px;height:27px;background:#edf3fb"></div>
<div class="btn" style="left:340px;top:590px;width:64px;height:23px"><svg style="position:absolute;left:7px;top:5px" width="17" height="15" viewBox="0 0 17 15"><rect x="0.5" y="0.5" width="6.5" height="8.5" fill="#fff"/><rect x="0" y="5" width="7" height="3.4" fill="#ee7880"/><path d="M0 0.5 H7 V8.5 H0 M0 4.5 H7" fill="none" stroke="#000" stroke-width="1"/><path d="M6.2 11.7 H11.5" stroke="#00008c" stroke-width="1.2"/><path d="M5.8 11.7 L8.6 9.2 V14.2Z" fill="#00008c"/><rect x="11.5" y="9.5" width="4.5" height="4.5" fill="#7fe8f0"/><path d="M16 9.5 H11.5 V14 H16" fill="none" stroke="#000" stroke-width="1"/></svg><span style="position:absolute;left:30px;top:1.6px;font-size:13px">New</span></div>
<div class="abs" style="left:338px;top:615px;width:797px;height:22px;background:#f5f5f5;border-top:1px solid #c8c8c8;border-bottom:1px solid #c8c8c8"></div>
<div class="abs" style="left:338px;top:663px;width:797px;height:26px;background:#f9f9f9"></div>
<div class="abs" style="left:338px;top:715px;width:797px;height:26px;background:#f9f9f9"></div>
<div class="abs" style="left:338px;top:767px;width:797px;height:1px;background:#c8c8c8"></div>
<div class="abs" style="left:505px;top:616px;width:1px;height:151px;background:#cfcfcf"></div>
<div class="abs" style="left:681px;top:616px;width:1px;height:151px;background:#cfcfcf"></div>
<div class="abs" style="left:862px;top:616px;width:1px;height:151px;background:#cfcfcf"></div>
<div class="abs" style="left:1043px;top:616px;width:1px;height:151px;background:#cfcfcf"></div>
<div class="abs" style="left:1111px;top:616px;width:1px;height:151px;background:#cfcfcf"></div>
<div class="lbl" style="left:344px;top:616px;text-align:left"><b style="letter-spacing:0.37px">Property</b></div>
<div class="lbl" style="left:512px;top:616px;text-align:left"><b style="letter-spacing:0.4px">Description</b></div>
<div class="lbl" style="left:688px;top:616px;text-align:left"><b style="letter-spacing:0.23px">Display on item listing</b></div>
<div class="lbl" style="left:869px;top:616px;text-align:left"><b style="letter-spacing:0.28px">Display on item detail</b></div>
<div class="lbl" style="left:344px;top:640px;text-align:left;color:#444;letter-spacing:-0.31px">PRODUCTBRAND</div>
<div class="lbl" style="left:512px;top:640px;text-align:left;color:#444">Brand</div>
<div class="cb" style="left:688px;top:643px"></div>
<div class="cb" style="left:869px;top:643px"><svg width="11" height="11" viewBox="0 0 11 11" style="position:absolute;left:0;top:0"><path d="M1.5 5.5 L4.3 8.3 L9.8 2.2" fill="none" stroke="#222" stroke-width="1.2"/></svg></div>
<svg class="abs" style="left:1080px;top:646px" width="12" height="11" viewBox="0 0 12 11"><path d="M2 1.3 L10.6 10" fill="none" stroke="#e00a0a" stroke-width="1.7" stroke-linecap="round"/><path d="M2 10.3 L6.6 4.8" fill="none" stroke="#e00a0a" stroke-width="1.7" stroke-linecap="round"/><path d="M6.6 4.6 L11 0.9" fill="none" stroke="#ea3a3a" stroke-width="1" stroke-linecap="round"/></svg>
<div class="lbl" style="left:344px;top:666px;text-align:left;color:#444;letter-spacing:-0.4px">STONETHICKNESS</div>
<div class="lbl" style="left:512px;top:666px;text-align:left;color:#444">Thickness</div>
<div class="cb" style="left:688px;top:669px"><svg width="11" height="11" viewBox="0 0 11 11" style="position:absolute;left:0;top:0"><path d="M1.5 5.5 L4.3 8.3 L9.8 2.2" fill="none" stroke="#222" stroke-width="1.2"/></svg></div>
<div class="cb" style="left:869px;top:669px"><svg width="11" height="11" viewBox="0 0 11 11" style="position:absolute;left:0;top:0"><path d="M1.5 5.5 L4.3 8.3 L9.8 2.2" fill="none" stroke="#222" stroke-width="1.2"/></svg></div>
<svg class="abs" style="left:1080px;top:672px" width="12" height="11" viewBox="0 0 12 11"><path d="M2 1.3 L10.6 10" fill="none" stroke="#e00a0a" stroke-width="1.7" stroke-linecap="round"/><path d="M2 10.3 L6.6 4.8" fill="none" stroke="#e00a0a" stroke-width="1.7" stroke-linecap="round"/><path d="M6.6 4.6 L11 0.9" fill="none" stroke="#ea3a3a" stroke-width="1" stroke-linecap="round"/></svg>
<div class="lbl" style="left:344px;top:692px;text-align:left;color:#444;letter-spacing:-0.19px">TOOLPOSITION</div>
<div class="lbl" style="left:512px;top:692px;text-align:left;color:#444">Position</div>
<div class="cb" style="left:688px;top:695px"></div>
<div class="cb" style="left:869px;top:695px"><svg width="11" height="11" viewBox="0 0 11 11" style="position:absolute;left:0;top:0"><path d="M1.5 5.5 L4.3 8.3 L9.8 2.2" fill="none" stroke="#222" stroke-width="1.2"/></svg></div>
<svg class="abs" style="left:1080px;top:698px" width="12" height="11" viewBox="0 0 12 11"><path d="M2 1.3 L10.6 10" fill="none" stroke="#e00a0a" stroke-width="1.7" stroke-linecap="round"/><path d="M2 10.3 L6.6 4.8" fill="none" stroke="#e00a0a" stroke-width="1.7" stroke-linecap="round"/><path d="M6.6 4.6 L11 0.9" fill="none" stroke="#ea3a3a" stroke-width="1" stroke-linecap="round"/></svg>
<div class="lbl" style="left:344px;top:718px;text-align:left;color:#444;letter-spacing:-0.05px">TOOLPROFILE</div>
<div class="lbl" style="left:512px;top:718px;text-align:left;color:#444">Profile</div>
<div class="cb" style="left:688px;top:721px"></div>
<div class="cb" style="left:869px;top:721px"><svg width="11" height="11" viewBox="0 0 11 11" style="position:absolute;left:0;top:0"><path d="M1.5 5.5 L4.3 8.3 L9.8 2.2" fill="none" stroke="#222" stroke-width="1.2"/></svg></div>
<svg class="abs" style="left:1080px;top:724px" width="12" height="11" viewBox="0 0 12 11"><path d="M2 1.3 L10.6 10" fill="none" stroke="#e00a0a" stroke-width="1.7" stroke-linecap="round"/><path d="M2 10.3 L6.6 4.8" fill="none" stroke="#e00a0a" stroke-width="1.7" stroke-linecap="round"/><path d="M6.6 4.6 L11 0.9" fill="none" stroke="#ea3a3a" stroke-width="1" stroke-linecap="round"/></svg>
<div class="lbl" style="left:344px;top:744px;text-align:left;color:#444;letter-spacing:-0.58px">BRANDNAME</div>
<div class="lbl" style="left:512px;top:744px;text-align:left;color:#444">Brand</div>
<div class="cb" style="left:688px;top:747px"><svg width="11" height="11" viewBox="0 0 11 11" style="position:absolute;left:0;top:0"><path d="M1.5 5.5 L4.3 8.3 L9.8 2.2" fill="none" stroke="#222" stroke-width="1.2"/></svg></div>
<div class="cb" style="left:869px;top:747px"><svg width="11" height="11" viewBox="0 0 11 11" style="position:absolute;left:0;top:0"><path d="M1.5 5.5 L4.3 8.3 L9.8 2.2" fill="none" stroke="#222" stroke-width="1.2"/></svg></div>
<svg class="abs" style="left:1080px;top:750px" width="12" height="11" viewBox="0 0 12 11"><path d="M2 1.3 L10.6 10" fill="none" stroke="#e00a0a" stroke-width="1.7" stroke-linecap="round"/><path d="M2 10.3 L6.6 4.8" fill="none" stroke="#e00a0a" stroke-width="1.7" stroke-linecap="round"/><path d="M6.6 4.6 L11 0.9" fill="none" stroke="#ea3a3a" stroke-width="1" stroke-linecap="round"/></svg>
<div class="lbl" style="left:815.5px;width:300px;top:796px;color:#444;letter-spacing:.2px">Page <b>1</b> of <b>1</b> (5 items)</div>
</div>
</body>
</html>
